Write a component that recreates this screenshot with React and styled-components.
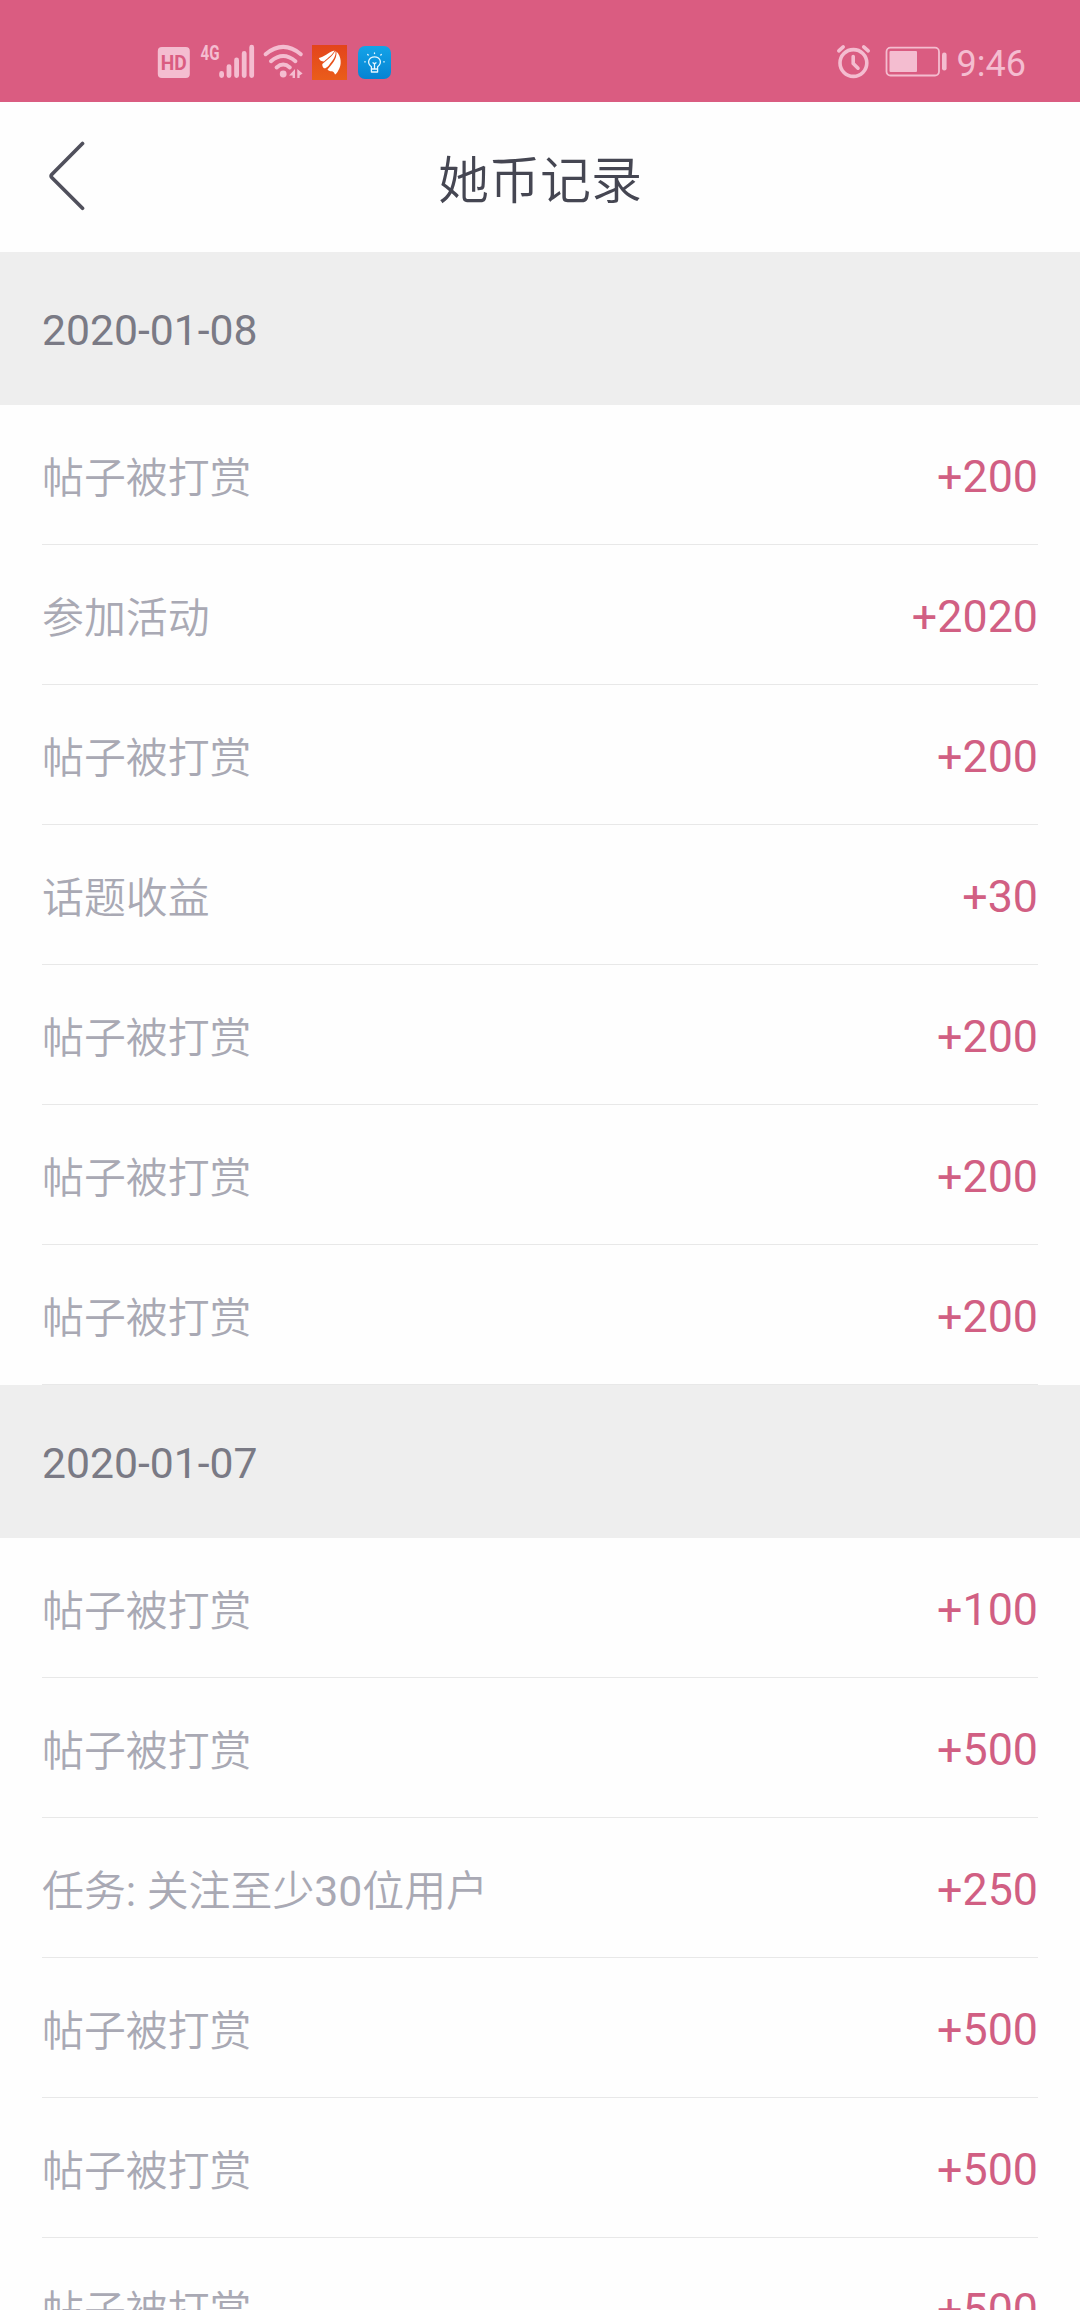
import React from "react";
import styled, { createGlobalStyle } from "styled-components";

const TINT = "#f4bdd0";

const GlobalStyle = createGlobalStyle`
  *, *::before, *::after { box-sizing: border-box; }
  body {
    margin: 0;
    background: #fefefe;
    font-family: Roboto, "Noto Sans CJK SC", sans-serif;
  }
`;

const Screen = styled.main`
  width: 1080px;
  height: 2310px;
  overflow: hidden;
  background: #fefefe;
`;

const StatusBar = styled.div`
  display: flex;
  justify-content: space-between;
  height: 102px;
  padding: 44px 54px 0 157px;
  background: #da5c81;
`;

const StatusGroup = styled.div`
  display: flex;
  align-items: flex-start;
  height: 36px;
`;

const StatusIcon = styled.svg`
  display: block;
  flex: none;
  overflow: visible;
  margin-left: ${(p) => p.$gap || 0}px;
`;

const Clock = styled.time`
  margin-left: 10px;
  color: ${TINT};
  font-size: 36px;
  font-weight: 400;
  line-height: 40px;
`;

const Header = styled.header`
  display: grid;
  grid-template-columns: 120px 1fr 120px;
  align-items: center;
  height: 150px;
`;

const BackButton = styled.button`
  display: flex;
  height: 150px;
  padding: 39px 0 0 46px;
  border: 0;
  background: none;
`;

const Title = styled.h1`
  margin: 0;
  color: #454652;
  font-family: "Noto Sans CJK SC DemiLight", "Noto Sans CJK SC", sans-serif;
  font-size: 51px;
  font-weight: 350;
  line-height: 60px;
  text-align: center;
`;

const DateBar = styled.h2`
  display: flex;
  align-items: center;
  height: 153px;
  margin: 0;
  padding: 2px 42px 0;
  background: #eee;
  color: #7a7a85;
  font-size: 42.7px;
  font-weight: 400;
`;

const List = styled.ul`
  margin: 0;
  padding: 0 42px;
  list-style: none;
`;

const Row = styled.li`
  display: flex;
  align-items: center;
  justify-content: space-between;
  height: 140px;
  border-bottom: 1px solid #e8e8e8;
`;

const Label = styled.span`
  padding-top: 8px;
  color: #a9a9b4;
  font-family: Roboto, "Noto Sans CJK SC DemiLight", "Noto Sans CJK SC", sans-serif;
  font-size: 41.9px;
  font-weight: 350;
  line-height: 50px;
`;

const Latin = styled.span`
  font-size: 42.7px;
  font-weight: 400;
  line-height: 1;
`;

const Amount = styled.span`
  padding-top: 5px;
  color: #d15f83;
  font-size: 44.8px;
  font-weight: 400;
  line-height: 50px;
`;

const tipped = "帖子被打赏";

const days = [
  {
    date: "2020-01-08",
    records: [
      [tipped, 200],
      ["参加活动", 2020],
      [tipped, 200],
      ["话题收益", 30],
      [tipped, 200],
      [tipped, 200],
      [tipped, 200],
    ],
  },
  {
    date: "2020-01-07",
    records: [
      [tipped, 100],
      [tipped, 500],
      [<>任务<Latin>: </Latin>关注至少<Latin>30</Latin>位用户</>, 250],
      [tipped, 500],
      [tipped, 500],
      [tipped, 500],
    ],
  },
];

const HdIcon = () => (
  <StatusIcon width="34" height="36" viewBox="157 44 34 36">
    <rect x="157.8" y="47" width="32" height="31" rx="4" fill={TINT} />
    <text x="173.8" y="69.6" textAnchor="middle" textLength="26" lengthAdjust="spacingAndGlyphs" fontFamily="Roboto, sans-serif" fontSize="20" fontWeight="700" fill="#da5c81">HD</text>
  </StatusIcon>
);

const SignalIcon = () => (
  <StatusIcon $gap={9} width="56" height="36" viewBox="200 44 56 36">
    <text x="200.6" y="59.6" textLength="19" lengthAdjust="spacingAndGlyphs" fontFamily="Roboto, sans-serif" fontSize="20" fontWeight="700" fill={TINT}>4G</text>
    <g stroke={TINT} strokeWidth="4.8" strokeLinecap="round">
      <path d="M221.6 73.4V75.6M229 66.6V75.6M236.6 60V75.6M244.2 53.4V75.6M251.7 47.2V75.6" />
    </g>
  </StatusIcon>
);

const WifiIcon = () => (
  <StatusIcon $gap={7} width="42" height="36" viewBox="263 44 42 36">
    <g fill="none" stroke={TINT} strokeWidth="4" strokeLinecap="round">
      <path d="M265.6 54.2Q283.2 39.6 300.8 54.2" />
      <path d="M271 61.2Q283.2 50.8 295.4 61.2" />
      <path d="M276.6 67.4Q283.2 61.6 289.8 67.4" />
    </g>
    <circle cx="283.2" cy="74" r="3.4" fill={TINT} />
    <path d="M295 69V78H292.600V75.600H289ZM297.300 69L302.600 73.400L299.600 75.400V78H297.300Z" fill={TINT} />
  </StatusIcon>
);

const FeatherAppIcon = () => (
  <StatusIcon $gap={7} width="35" height="36" viewBox="312 44 35 36">
    <defs>
      <linearGradient id="featherTile" x1="0" y1="0" x2="0" y2="1">
        <stop offset="0" stopColor="#e3441c" />
        <stop offset="1" stopColor="#ea5d1a" />
      </linearGradient>
    </defs>
    <rect x="312" y="45" width="35" height="35" fill="url(#featherTile)" />
    <g fill="#fff">
      <path d="M318.800 58C324 57.500 328 52 334.500 50.500C333 54.500 328 57.500 324 61.500C321.500 61.500 319.500 60.500 318.800 58Z" />
      <path d="M322.300 64C326.500 60.500 332 57 335.300 50.800C336.800 56 332.500 60.500 328.800 65.500C327 67.500 325.500 68.500 324 68.300C322.800 67.500 322.200 66 322.300 64Z" />
      <path d="M327.500 69.500C331.500 64.500 337 60 336.500 51.500C341.500 56.500 342 65 338.300 70.500C337.200 72.500 336.300 74 335 74.500C334.300 72.500 333.500 71.500 331.500 71.300C329.800 71.200 328.300 70.600 327.500 69.500Z" />
    </g>
  </StatusIcon>
);

const BulbAppIcon = () => (
  <StatusIcon $gap={10} width="35" height="36" viewBox="357 44 35 36">
    <defs>
      <linearGradient id="bulbTile" x1="0" y1="0" x2="0" y2="1">
        <stop offset="0" stopColor="#13a3e8" />
        <stop offset="1" stopColor="#0583d2" />
      </linearGradient>
    </defs>
    <rect x="358" y="46" width="33" height="33" rx="7" fill="url(#bulbTile)" />
    <g fill="none" stroke="#e6f7ff" strokeWidth="1.3" strokeLinecap="round" strokeLinejoin="round">
      <path d="M371.400 69V66.800C366.200 62.500 369 56.800 374.500 56.800C380 56.800 382.800 62.500 377.600 66.800V69ZM371.400 69V72H377.600V69M374.500 68V63.500M373 62.800L374.500 64L376 62.800" />
      <path d="M374.500 53.500V53M368.200 55L367.700 54.500M380.800 55L381.300 54.500M365.300 61.800H364.700M383.700 61.800H384.300" />
    </g>
  </StatusIcon>
);

const AlarmIcon = () => (
  <StatusIcon width="35" height="36" viewBox="836 44 35 36">
    <g fill="none" stroke={TINT} strokeWidth="3.600" strokeLinecap="round" strokeLinejoin="round">
      <circle cx="853.400" cy="63" r="13.400" />
      <path d="M853.200 56.500V63.500L858 68.200" />
      <path d="M838.800 50.800L843.200 46.900M863.700 46.900L868.200 50.800" />
    </g>
  </StatusIcon>
);

const BatteryIcon = () => (
  <StatusIcon $gap={14} width="62" height="36" viewBox="885 44 62 36">
    <rect x="886.500" y="47.700" width="52.500" height="27.800" rx="4" fill="none" stroke={TINT} strokeWidth="1.800" />
    <rect x="889.500" y="51" width="27.500" height="21" rx="1" fill={TINT} />
    <rect x="942" y="52.500" width="4.600" height="18" rx="2.200" fill={TINT} />
  </StatusIcon>
);

export default function App() {
  return (
    <Screen>
      <GlobalStyle />
      <StatusBar>
        <StatusGroup>
          <HdIcon />
          <SignalIcon />
          <WifiIcon />
          <FeatherAppIcon />
          <BulbAppIcon />
        </StatusGroup>
        <StatusGroup>
          <AlarmIcon />
          <BatteryIcon />
          <Clock>9:46</Clock>
        </StatusGroup>
      </StatusBar>
      <Header>
        <BackButton aria-label="返回">
          <svg width="40" height="70" viewBox="46 141 40 70">
            <path d="M82.500 143.500L52 174.200Q50.300 176 52 177.800L82.500 208.300" fill="none" stroke="#50505c" strokeWidth="3.700" strokeLinecap="round" strokeLinejoin="round" />
          </svg>
        </BackButton>
        <Title>她币记录</Title>
      </Header>
      {days.map((day) => (
        <section key={day.date}>
          <DateBar>{day.date}</DateBar>
          <List>
            {day.records.map(([label, amount], i) => (
              <Row key={i}>
                <Label>{label}</Label>
                <Amount>+{amount}</Amount>
              </Row>
            ))}
          </List>
        </section>
      ))}
    </Screen>
  );
}
